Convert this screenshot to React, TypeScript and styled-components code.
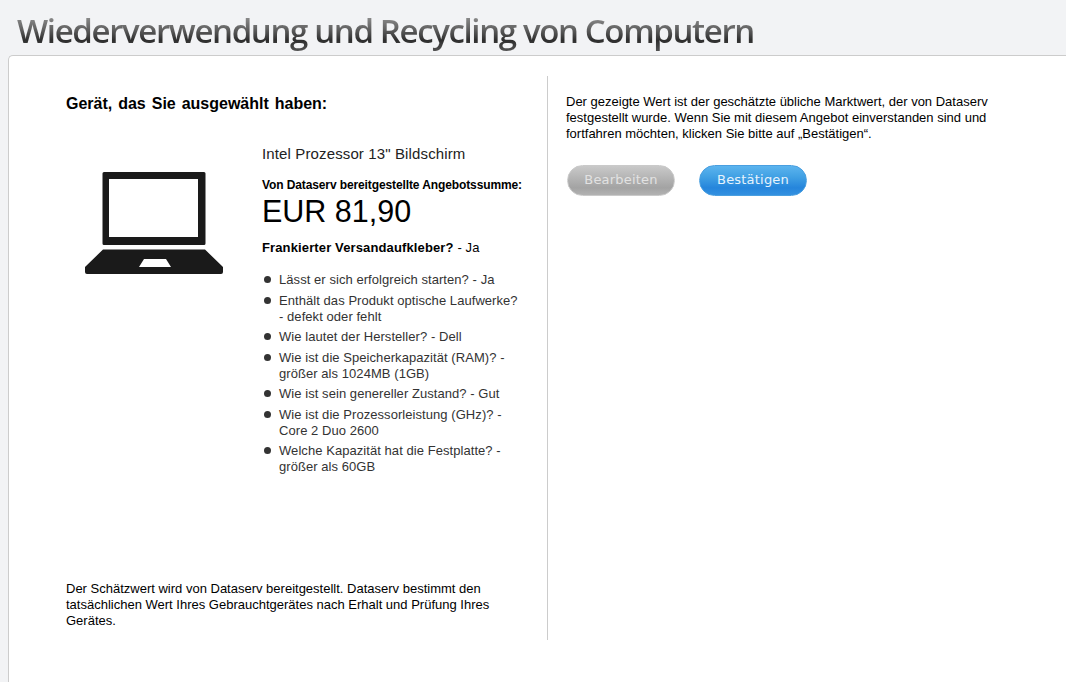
import React from "react";
import styled, { createGlobalStyle } from "styled-components";

const Global = createGlobalStyle`
  html, body { margin: 0; padding: 0; background: #f2f3f5; overflow: hidden; }
  body { font-family: "Liberation Sans", Arial, sans-serif; font-size: 13px; color: #000; }
`;
const Page = styled.div`height: 682px; width: 1066px; display: flex; flex-direction: column; overflow: hidden;`;
const Header = styled.header`height: 55px; padding-left: 17px; display: flex; align-items: flex-start; box-sizing: border-box;`;
const Title = styled.h1`
  margin: 10px 0 0; font-family: "Open Sans", sans-serif; font-weight: 600; font-size: 33px; line-height: 42px;
  letter-spacing: -1.36px; white-space: nowrap;
  background: linear-gradient(180deg, #8f8f8f 15%, #626262 45%, #2e2e2e 72%, #555 100%);
  -webkit-background-clip: text; background-clip: text; color: transparent;
`;
const Panel = styled.main`
  flex: 1; margin-left: 8px; background: #fff; border: 1px solid #ccc; border-width: 1px 0 0 1px;
  border-top-left-radius: 5px; display: flex; padding-top: 20px; align-items: flex-start;
`;
const LeftColumn = styled.section`
  width: 539px; height: 564px; box-sizing: border-box; border-right: 1px solid #ccc; padding: 19px 22px 0 57px;
  display: flex; flex-direction: column;
`;
const Heading = styled.h2`margin: 0; font-size: 16px; line-height: 18px; font-weight: 700; word-spacing: 1.5px;`;
const Device = styled.div`display: flex; margin-top: 32px;`;
const LaptopBox = styled.div`width: 196px; flex: none; padding-top: 26px;`;
const LaptopIcon = styled.svg`display: block; margin-left: 19px;`;
const Details = styled.div`flex: 1; min-width: 0;`;
const Name = styled.div`font-size: 15px; line-height: 18px; letter-spacing: .13px; color: #222;`;
const OfferLabel = styled.div`margin-top: 15px; font-size: 12px; line-height: 14px; font-weight: 700; letter-spacing: -.11px; white-space: nowrap;`;
const Price = styled.div`font-size: 30.5px; line-height: 36px; margin-top: 1px;`;
const Shipping = styled.div`margin-top: 11px; line-height: 16px; letter-spacing: .13px; b { font-weight: 700; }`;
const Attrs = styled.ul`margin: 16px 0 0; padding: 0; list-style: none;`;
const Attr = styled.li`
  position: relative; padding-left: 17px; line-height: 16px; color: #333; margin-bottom: 4.5px; letter-spacing: .06px;
  &::before { content: ""; position: absolute; left: 2px; top: 4px; width: 7px; height: 7px; border-radius: 50%; background: #333; }
`;
const Note = styled.p`margin: auto 0 11px; line-height: 16px; width: 430px;`;
const RightColumn = styled.section`padding: 18px 0 0 18px; width: 440px;`;
const Intro = styled.p`margin: 0; line-height: 16px; width: 430px;`;
const Actions = styled.div`display: flex; gap: 24px; margin-top: 23px; padding-left: 1px;`;
const Pill = styled.button<{ $primary?: boolean }>`
  width: 108px; height: 31px; border-radius: 15.5px; padding: 0 0 2px; font-family: "DejaVu Sans", sans-serif; font-size: 13px; letter-spacing: .2px;
  border: 1px solid ${p => (p.$primary ? "#4a9fe0" : "#cacaca")};
  color: ${p => (p.$primary ? "#e6f3fd" : "#e2e2e2")};
  background: ${p => p.$primary
    ? "linear-gradient(180deg, #5cb4ee 0%, #3f9fe3 40%, #2585dc 75%, #3390e0 100%)"
    : "linear-gradient(180deg, #c9c9c9 0%, #b5b5b5 40%, #a3a3a3 75%, #b2b2b2 100%)"};
`;

const items = [
  "Lässt er sich erfolgreich starten? - Ja",
  "Enthält das Produkt optische Laufwerke? - defekt oder fehlt",
  "Wie lautet der Hersteller? - Dell",
  "Wie ist die Speicherkapazität (RAM)? - größer als 1024MB (1GB)",
  "Wie ist sein genereller Zustand? - Gut",
  "Wie ist die Prozessorleistung (GHz)? - Core 2 Duo 2600",
  "Welche Kapazität hat die Festplatte? - größer als 60GB",
];

const Laptop = () => (
  <LaptopIcon width="140" height="104" viewBox="86 171 140 104">
    <path fill="#1a1a1a" fillRule="evenodd" d="M105 172h100a1.5 1.5 0 0 1 1.500 1.500v70a1.500 1.500 0 0 1-1.500 1.500h-100a1.500 1.500 0 0 1-1.500-1.500v-70a1.500 1.500 0 0 1 1.500-1.500zM110 179v58h89v-58z" />
    <path fill="#1a1a1a" fillRule="evenodd" d="M104 249.500h102l18 17.500v5a2 2 0 0 1-2 2h-134a2 2 0 0 1-2-2v-5zM145 259l-5 8h32l-5-8z" />
  </LaptopIcon>
);

export default function App() {
  return (
    <Page>
      <Global />
      <Header><Title>Wiederverwendung und Recycling von Computern</Title></Header>
      <Panel>
        <LeftColumn>
          <Heading>Gerät, das Sie ausgewählt haben:</Heading>
          <Device>
            <LaptopBox><Laptop /></LaptopBox>
            <Details>
              <Name>Intel Prozessor 13" Bildschirm</Name>
              <OfferLabel>Von Dataserv bereitgestellte Angebotssumme:</OfferLabel>
              <Price>EUR 81,90</Price>
              <Shipping><b>Frankierter Versandaufkleber?</b> - Ja</Shipping>
              <Attrs>{items.map(t => <Attr key={t}>{t}</Attr>)}</Attrs>
            </Details>
          </Device>
          <Note>Der Schätzwert wird von Dataserv bereitgestellt. Dataserv bestimmt den tatsächlichen Wert Ihres Gebrauchtgerätes nach Erhalt und Prüfung Ihres Gerätes.</Note>
        </LeftColumn>
        <RightColumn>
          <Intro>Der gezeigte Wert ist der geschätzte übliche Marktwert, der von Dataserv festgestellt wurde. Wenn Sie mit diesem Angebot einverstanden sind und fortfahren möchten, klicken Sie bitte auf „Bestätigen“.</Intro>
          <Actions>
            <Pill>Bearbeiten</Pill>
            <Pill $primary>Bestätigen</Pill>
          </Actions>
        </RightColumn>
      </Panel>
    </Page>
  );
}
